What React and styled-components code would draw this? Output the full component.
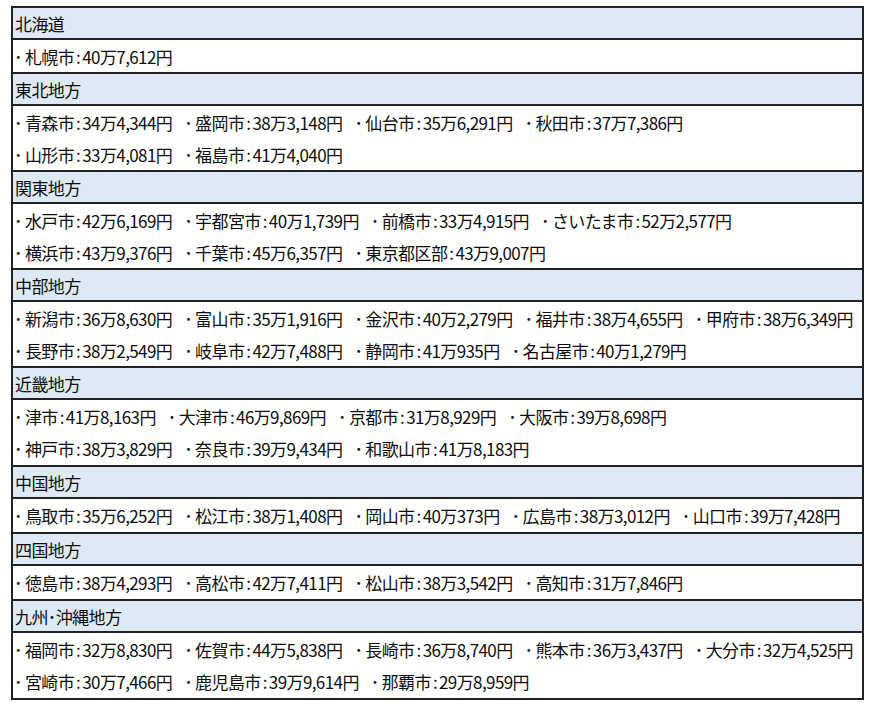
import React from "react";
import styled, { createGlobalStyle } from "styled-components";

const GlobalStyle = createGlobalStyle`
  html, body {
    margin: 0;
    padding: 0;
    background: #ffffff;
  }
  body {
    font-family: "Noto Sans CJK JP", "Noto Sans", sans-serif;
    color: #0d0d0d;
  }
`;

const Page = styled.div`
  padding: 6px 0 0 11px;
`;

const Table = styled.div`
  width: 853px;
  box-sizing: border-box;
  border: 2px solid #222222;
  display: flex;
  flex-direction: column;
`;

const RegionHeader = styled.div`
  height: 30px;
  box-sizing: content-box;
  background: #dde9f5;
  border-top: ${(p) => (p.$first ? "none" : "2px solid #222222")};
  display: flex;
  align-items: center;
  padding-left: 2px;
  font-size: 17px;
  letter-spacing: -0.6px;
  line-height: 1;
  white-space: nowrap;
`;

const CityBlock = styled.div`
  border-top: 2px solid #222222;
  background: #ffffff;
  display: flex;
  flex-direction: column;
  padding-bottom: ${(p) => (p.$tall ? "1px" : "0")};
`;

const CityLine = styled.div`
  height: 32px;
  display: flex;
  align-items: center;
  gap: 12px;
  margin-left: 1px;
  font-size: 17px;
  letter-spacing: -0.6px;
  line-height: 1;
  white-space: nowrap;
`;

const CityItem = styled.span`
  display: inline-flex;
  align-items: center;
`;

const Bullet = styled.span`
  margin-right: 3px;
`;

const Colon = styled.span`
  margin: 0 2px;
`;

const regions = [
  { name: "北海道", lines: [[["札幌市", "40万7,612円"]]] },
  {
    name: "東北地方",
    lines: [
      [
        ["青森市", "34万4,344円"],
        ["盛岡市", "38万3,148円"],
        ["仙台市", "35万6,291円"],
        ["秋田市", "37万7,386円"],
      ],
      [
        ["山形市", "33万4,081円"],
        ["福島市", "41万4,040円"],
      ],
    ],
  },
  {
    name: "関東地方",
    lines: [
      [
        ["水戸市", "42万6,169円"],
        ["宇都宮市", "40万1,739円"],
        ["前橋市", "33万4,915円"],
        ["さいたま市", "52万2,577円"],
      ],
      [
        ["横浜市", "43万9,376円"],
        ["千葉市", "45万6,357円"],
        ["東京都区部", "43万9,007円"],
      ],
    ],
  },
  {
    name: "中部地方",
    lines: [
      [
        ["新潟市", "36万8,630円"],
        ["富山市", "35万1,916円"],
        ["金沢市", "40万2,279円"],
        ["福井市", "38万4,655円"],
        ["甲府市", "38万6,349円"],
      ],
      [
        ["長野市", "38万2,549円"],
        ["岐阜市", "42万7,488円"],
        ["静岡市", "41万935円"],
        ["名古屋市", "40万1,279円"],
      ],
    ],
  },
  {
    name: "近畿地方",
    lines: [
      [
        ["津市", "41万8,163円"],
        ["大津市", "46万9,869円"],
        ["京都市", "31万8,929円"],
        ["大阪市", "39万8,698円"],
      ],
      [
        ["神戸市", "38万3,829円"],
        ["奈良市", "39万9,434円"],
        ["和歌山市", "41万8,183円"],
      ],
    ],
  },
  {
    name: "中国地方",
    lines: [
      [
        ["鳥取市", "35万6,252円"],
        ["松江市", "38万1,408円"],
        ["岡山市", "40万373円"],
        ["広島市", "38万3,012円"],
        ["山口市", "39万7,428円"],
      ],
    ],
  },
  {
    name: "四国地方",
    lines: [
      [
        ["徳島市", "38万4,293円"],
        ["高松市", "42万7,411円"],
        ["松山市", "38万3,542円"],
        ["高知市", "31万7,846円"],
      ],
    ],
  },
  {
    name: "九州･沖縄地方",
    lines: [
      [
        ["福岡市", "32万8,830円"],
        ["佐賀市", "44万5,838円"],
        ["長崎市", "36万8,740円"],
        ["熊本市", "36万3,437円"],
        ["大分市", "32万4,525円"],
      ],
      [
        ["宮崎市", "30万7,466円"],
        ["鹿児島市", "39万9,614円"],
        ["那覇市", "29万8,959円"],
      ],
    ],
  },
];

export default function App() {
  return (
    <>
      <GlobalStyle />
      <Page>
        <Table>
          {regions.map((region, ri) => (
            <React.Fragment key={region.name}>
              <RegionHeader $first={ri === 0}>{region.name}</RegionHeader>
              <CityBlock $tall={ri >= 4}>
                {region.lines.map((line, li) => (
                  <CityLine key={li}>
                    {line.map(([city, value]) => (
                      <CityItem key={city}>
                        <Bullet>･</Bullet>
                        {city}
                        <Colon>:</Colon>
                        {value}
                      </CityItem>
                    ))}
                  </CityLine>
                ))}
              </CityBlock>
            </React.Fragment>
          ))}
        </Table>
      </Page>
    </>
  );
}
